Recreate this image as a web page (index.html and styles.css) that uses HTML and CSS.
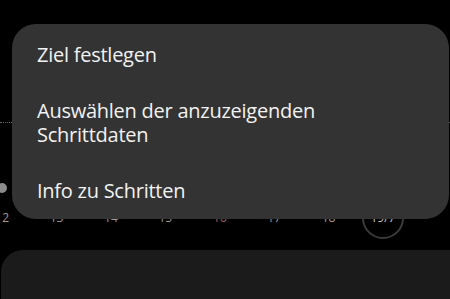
FILE: index.html
```html
<!DOCTYPE html>
<html lang="de">
<head>
<meta charset="utf-8">
<title>Schritte</title>
<link rel="stylesheet" href="styles.css">
</head>
<body>
<div class="screen">
  <section class="chart">
    <div class="gridline"></div>
    <span class="point"></span>
    <div class="days">
      <span class="day">12</span>
      <span class="day">13</span>
      <span class="day">14</span>
      <span class="day">15</span>
      <span class="day sun">16</span>
      <span class="day">17</span>
      <span class="day">18</span>
      <span class="day sel"><span class="ring">19/7</span></span>
    </div>
  </section>
  <section class="card"></section>

  <ul class="menu">
    <li class="item">Ziel festlegen</li>
    <li class="item">Auswählen der anzuzeigenden Schrittdaten</li>
    <li class="item">Info zu Schritten</li>
  </ul>
</div>
</body>
</html>
```
FILE: styles.css
```css
html, body {
  margin: 0;
  padding: 0;
  background: #000;
}
body {
  font-family: "Open Sans", "Noto Sans", sans-serif;
}
.screen {
  position: relative;
  width: 450px;
  height: 299px;
  overflow: hidden;
  background: #000;
}
.chart {
  position: relative;
  height: 250px;
  display: flex;
  flex-direction: column;
}
.gridline {
  margin-top: 122px;
  height: 0;
  border-top: 1px dotted #6a6a6a;
}
.point {
  position: absolute;
  left: -3px;
  top: 183px;
  width: 10px;
  height: 10px;
  border-radius: 50%;
  background: #8a8a8a;
}
.days {
  margin-top: 73px;
  margin-left: -25px;
  display: flex;
  height: 44px;
}
.day {
  flex: 0 0 54.4px;
  display: flex;
  align-items: center;
  justify-content: center;
  font-size: 12px;
  line-height: 14px;
  color: #9a9a9a;
}
.day.sun {
  color: #c4504e;
}
.ring {
  width: 42px;
  height: 42px;
  box-sizing: border-box;
  border: 2px solid #3a3a3a;
  border-radius: 50%;
  display: flex;
  align-items: center;
  justify-content: center;
  color: #c8c8c8;
}
.card {
  height: 60px;
  margin-left: 1px;
  margin-right: -20px;
  background: #1b1b1b;
  border-radius: 22px 22px 0 0;
}
.menu {
  position: absolute;
  left: 12px;
  top: 24px;
  width: 437px;
  margin: 0;
  padding: 3px 0 0;
  list-style: none;
  box-sizing: border-box;
  background: #333333;
  border-radius: 24px;
}
.item {
  padding: 16px 60px 16px 25px;
  font-size: 20px;
  line-height: 24px;
  letter-spacing: -0.25px;
  color: #f2f2f2;
}
```
